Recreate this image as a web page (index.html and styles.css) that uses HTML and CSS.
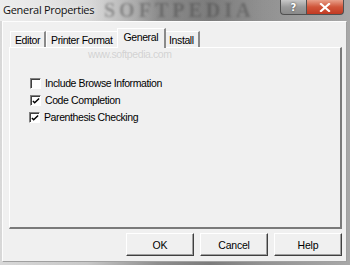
FILE: index.html
```html
<!DOCTYPE html>
<html>
<head>
<meta charset="utf-8">
<link rel="stylesheet" href="styles.css">
</head>
<body>
<div class="window">
  <div class="titlebar">
    <span class="title">General Properties</span>
    <span class="watermark">SOFTPEDIA</span>
    <div class="caption-btns">
      <div class="cap help-cap">?</div>
      <div class="cap close-cap">
        <svg width="12" height="9" viewBox="0 0 12 9"><path d="M2 1 L10 8 M10 1 L2 8" stroke="#fff" stroke-width="2.2" stroke-linecap="square"/></svg>
      </div>
    </div>
  </div>
  <div class="client">
    <div class="tabs">
      <div class="tab first">Editor</div>
      <div class="tab">Printer Format</div>
      <div class="tab active">General</div>
      <div class="tab">Install</div>
    </div>
    <div class="panel">
      <div class="site">www.softpedia.com</div>
      <label class="check"><span class="box"></span>Include Browse Information</label>
      <label class="check"><span class="box checked"><svg width="9" height="9" viewBox="0 0 9 9"><path d="M1 4 L3 6 L8 1" fill="none" stroke="#000" stroke-width="1.6"/></svg></span>Code Completion</label>
      <label class="check shift"><span class="box checked"><svg width="9" height="9" viewBox="0 0 9 9"><path d="M1 4 L3 6 L8 1" fill="none" stroke="#000" stroke-width="1.6"/></svg></span>Parenthesis Checking</label>
    </div>
    <div class="buttons">
      <button class="btn">OK</button>
      <button class="btn">Cancel</button>
      <button class="btn">Help</button>
    </div>
  </div>
</div>
</body>
</html>
```
FILE: styles.css
```css
html, body {
  margin: 0;
  padding: 0;
}
body {
  width: 350px;
  height: 265px;
  overflow: hidden;
  font-family: "Liberation Sans", Arial, sans-serif;
}
.window {
  width: 350px;
  height: 265px;
  display: flex;
  flex-direction: column;
  background: linear-gradient(90deg, #d8d8d8 0%, #c8c8c8 25%, #8e8e8e 45%, #7c7c7c 60%, #929292 75%, #a8a8a8 100%);
  position: relative;
  overflow: hidden;
}
.titlebar {
  height: 21px;
  display: flex;
  align-items: flex-start;
  position: relative;
  background: linear-gradient(90deg, rgba(240,240,240,0.9) 0%, rgba(230,230,230,0.6) 25%, rgba(120,120,120,0.1) 45%, rgba(0,0,0,0) 100%);
}
.title {
  font-family: "Open Sans", "Noto Sans", sans-serif;
  font-size: 11px;
  letter-spacing: -0.3px;
  color: #111;
  padding: 2px 0 0 3px;
  line-height: 16px;
  text-shadow: 0 0 6px rgba(255,255,255,0.9);
  white-space: nowrap;
  position: relative;
  z-index: 1;
}
.watermark {
  position: absolute;
  left: 104px;
  top: 0;
  font-family: "Liberation Serif", serif;
  font-weight: bold;
  font-size: 20px;
  line-height: 21px;
  letter-spacing: 4px;
  color: rgba(60,60,60,0.4);
  filter: blur(1.2px);
}
.caption-btns {
  margin-left: auto;
  margin-right: 6px;
  display: flex;
  position: relative;
  z-index: 1;
}
.cap {
  border: 1px solid #505050;
  border-top: none;
  display: flex;
  align-items: center;
  justify-content: center;
  box-sizing: border-box;
  height: 15px;
}
.help-cap {
  width: 26px;
  border-radius: 0 0 0 4px;
  background: linear-gradient(#c8c8c8, #9a9a9a 50%, #8a8a8a);
  color: #fff;
  font-family: "DejaVu Sans", sans-serif;
  font-weight: bold;
  font-size: 10px;
  text-shadow: 0 0 2px #333;
  border-right: none;
}
.close-cap {
  width: 38px;
  border-radius: 0 0 4px 0;
  background: linear-gradient(#e8a08a, #d0553a 50%, #c23a22);
}
.client {
  flex: 1;
  margin: 0 3px 3px 2px;
  background: #f0f0f0;
  border: 1px solid #fdfdfd;
  border-right-color: #a0a0a0;
  border-bottom-color: #a0a0a0;
  display: flex;
  flex-direction: column;
  padding: 6px 4px 0 6px;
  font-size: 10.5px;
  letter-spacing: -0.4px;
  color: #000;
}
.tabs {
  display: flex;
  align-items: flex-end;
  height: 19px;
  padding-left: 1px;
}
.tab {
  height: 16px;
  line-height: 16px;
  padding: 0 4px 0 4px;
  border-left: 1px solid #fff;
  border-top: 1px solid #fff;
  border-right: 2px solid #8a8a8a;
  box-sizing: border-box;
  background: #f0f0f0;
  white-space: nowrap;
  position: relative;
}
.tab.active {
  margin: 0 -2px -1px -2px;
  padding: 0 6px 0 6px;
  z-index: 2;
  line-height: 17px;
  height: 20px;
}
.panel {
  height: 182px;
  border: 1px solid #fff;
  border-right: 2px solid #7a7a7a;
  border-bottom: 2px solid #7a7a7a;
  box-sizing: border-box;
  display: flex;
  flex-direction: column;
  padding: 29px 0 0 20px;
  gap: 4px;
  position: relative;
}
.site {
  position: absolute;
  left: 78px;
  top: 0px;
  color: rgba(190,190,190,0.6);
  font-size: 10.5px;
}
.check {
  display: flex;
  align-items: center;
  gap: 4px;
  height: 13px;
  line-height: 13px;
}
.check.shift {
  margin-left: -1px;
}
.box {
  width: 11px;
  height: 11px;
  box-sizing: border-box;
  border: 1px solid #808080;
  border-right-color: #fff;
  border-bottom-color: #fff;
  box-shadow: inset 1px 1px 0 #404040;
  background: #fff;
  display: flex;
  align-items: center;
  justify-content: center;
}
.box svg {
  margin: 1px 0 0 1px;
}
.buttons {
  display: flex;
  justify-content: flex-end;
  gap: 6px;
  padding: 4px 0 0 0;
}
.btn {
  width: 68px;
  height: 23px;
  font-family: "Liberation Sans", Arial, sans-serif;
  font-size: 10.5px;
  letter-spacing: -0.2px;
  color: #000;
  background: #f0f0f0;
  border: 1px solid #fff;
  border-right-color: #404040;
  border-bottom-color: #404040;
  box-shadow: inset -1px -1px 0 #a0a0a0;
  padding: 0;
}
```
